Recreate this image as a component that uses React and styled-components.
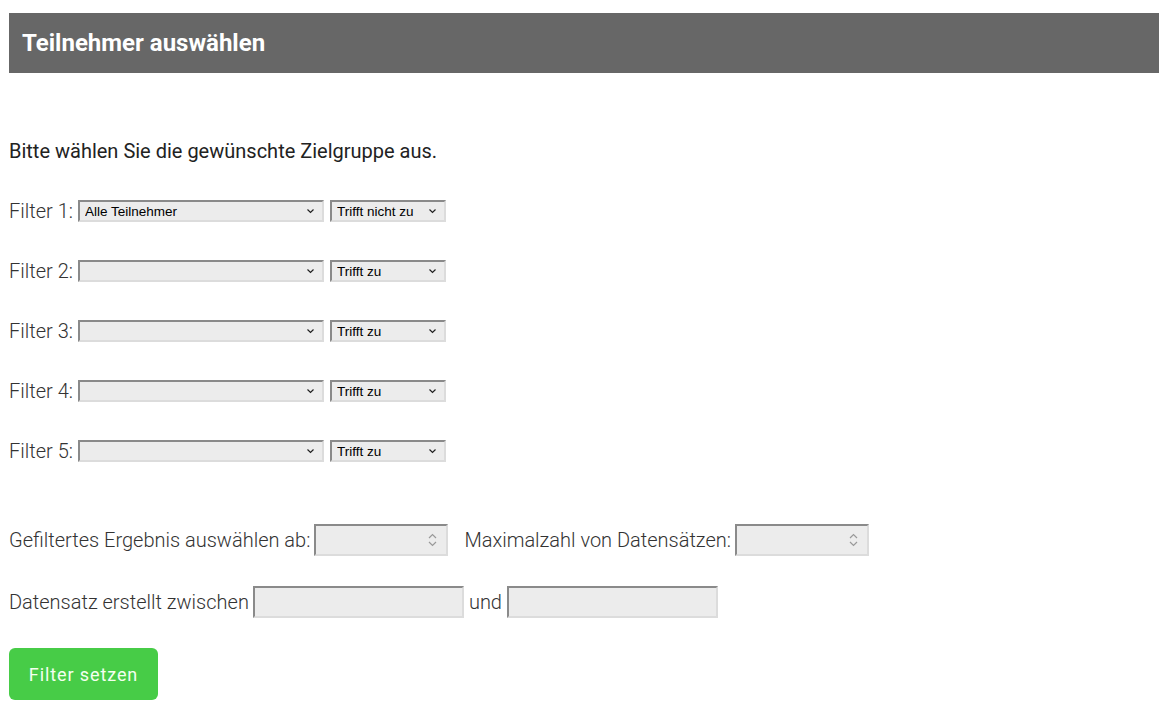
import React from "react";
import styled, { createGlobalStyle } from "styled-components";

const GlobalStyle = createGlobalStyle`
  body {
    margin: 0;
    background: #fff;
    font-family: Roboto, "Liberation Sans", sans-serif;
  }
`;

// container
const Page = styled.div`
  padding: 13px 13px 18px 9px;
  color: #222;
`;

const Header = styled.div`
  height: 60px;
  background: #676767;
  display: flex;
  align-items: center;
  padding-left: 13px;
`;

const Title = styled.h1`
  margin: 0;
  font-size: 24px;
  font-weight: 700;
  color: #fff;
`;

const Intro = styled.p`
  margin: 65px 0 0;
  font-size: 20px;
  line-height: 26px;
  color: #222;
`;

// filter rows
const FilterList = styled.div`
  margin-top: 36px;
  display: flex;
  flex-direction: column;
  gap: 38px;
`;

const Row = styled.div`
  display: flex;
  align-items: center;
  height: ${(p) => p.$height || 22}px;
  margin-top: ${(p) => p.$top || 0}px;
`;

const Label = styled.span`
  font-size: 20px;
  font-weight: 300;
  color: #333;
  margin-right: ${(p) => p.$gap ?? 5}px;
  margin-left: ${(p) => p.$left || 0}px;
  white-space: nowrap;
`;

const Field = styled.div`
  position: relative;
  width: ${(p) => p.$width}px;
  height: ${(p) => p.$height || 22}px;
  margin-right: ${(p) => p.$gap || 0}px;
  flex-shrink: 0;
`;

const Select = styled.select`
  appearance: none;
  width: 100%;
  height: 100%;
  box-sizing: border-box;
  margin: 0;
  padding: 0 20px 0 5px;
  background: #ececec;
  border: 2px solid;
  border-color: #8a8a8a #dcdcdc #dcdcdc #8a8a8a;
  border-radius: 0;
  font-family: "Liberation Sans", Arial, sans-serif;
  font-size: 13.5px;
  color: #000;
  outline: none;
`;

const Input = styled.input`
  width: 100%;
  height: 100%;
  box-sizing: border-box;
  margin: 0;
  padding: 0 24px 0 5px;
  background: #ececec;
  border: 2px solid;
  border-color: #8a8a8a #dcdcdc #dcdcdc #8a8a8a;
  border-radius: 0;
  font-family: Roboto, sans-serif;
  font-size: 16px;
  outline: none;
`;

const Chevron = styled.svg`
  position: absolute;
  right: 9px;
  top: 50%;
  transform: translateY(-50%);
  pointer-events: none;
`;

const Spinner = styled.svg`
  position: absolute;
  right: 10px;
  top: 50%;
  transform: translateY(-50%);
  pointer-events: none;
`;

const Button = styled.button`
  margin-top: 30px;
  width: 149px;
  height: 52px;
  background: #47cc47;
  border: none;
  border-radius: 6px;
  color: #f4fff0;
  font-family: Roboto, sans-serif;
  font-size: 18px;
  font-weight: 400;
  letter-spacing: 0.9px;
  cursor: pointer;
`;

function ChevronIcon() {
  return (
    <Chevron width="9" height="6" viewBox="0 0 9 6">
      <path d="M1.5 1.5 L4.5 4.5 L7.5 1.5" fill="none" stroke="#222" strokeWidth="1.2" />
    </Chevron>
  );
}

function SpinnerIcon() {
  return (
    <Spinner width="11" height="18" viewBox="0 0 11 18">
      <path d="M2 7 L5.5 3.5 L9 7" fill="none" stroke="#999" strokeWidth="1.2" />
      <path d="M2 11 L5.5 14.5 L9 11" fill="none" stroke="#999" strokeWidth="1.2" />
    </Spinner>
  );
}

function Dropdown({ width, gap, value, options }) {
  return (
    <Field $width={width} $gap={gap}>
      <Select defaultValue={value}>
        {options.map((o) => (
          <option key={o} value={o}>
            {o}
          </option>
        ))}
      </Select>
      <ChevronIcon />
    </Field>
  );
}

const filters = [
  { id: 1, value: "Alle Teilnehmer", mode: "Trifft nicht zu" },
  { id: 2, value: "", mode: "Trifft zu" },
  { id: 3, value: "", mode: "Trifft zu" },
  { id: 4, value: "", mode: "Trifft zu" },
  { id: 5, value: "", mode: "Trifft zu" },
];

function App() {
  return (
    <Page>
      <GlobalStyle />
      <Header>
        <Title>Teilnehmer auswählen</Title>
      </Header>
      <Intro>Bitte wählen Sie die gewünschte Zielgruppe aus.</Intro>
      <FilterList>
        {filters.map((f) => (
          <Row key={f.id}>
            <Label>Filter {f.id}:</Label>
            <Dropdown
              width={246}
              gap={6}
              value={f.value}
              options={["", "Alle Teilnehmer"]}
            />
            <Dropdown
              width={116}
              value={f.mode}
              options={["Trifft zu", "Trifft nicht zu"]}
            />
          </Row>
        ))}
      </FilterList>
      <Row $height={32} $top={62}>
        <Label $gap={4}>Gefiltertes Ergebnis auswählen ab:</Label>
        <Field $width={134} $height={32}>
          <Input type="text" />
          <SpinnerIcon />
        </Field>
        <Label $left={16} $gap={4}>Maximalzahl von Datensätzen:</Label>
        <Field $width={134} $height={32}>
          <Input type="text" />
          <SpinnerIcon />
        </Field>
      </Row>
      <Row $height={32} $top={30}>
        <Label $gap={4}>Datensatz erstellt zwischen</Label>
        <Field $width={211} $height={32}>
          <Input type="text" />
        </Field>
        <Label $left={5} $gap={5}>und</Label>
        <Field $width={211} $height={32}>
          <Input type="text" />
        </Field>
      </Row>
      <Button>Filter setzen</Button>
    </Page>
  );
}

export default App;
